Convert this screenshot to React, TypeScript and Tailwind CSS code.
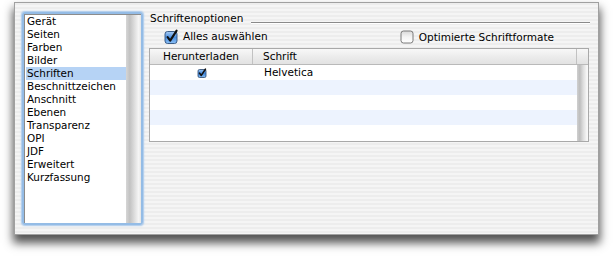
import React from "react";

const font = { fontFamily: '"DejaVu Sans", "Liberation Sans", sans-serif' };

function CheckedBox({ size = 13 }: { size?: number }) {
  return (
    <svg width={size + 2} height={size + 2} viewBox="0 0 15 15" className="shrink-0">
      <defs>
        <linearGradient id="cbb" x1="0" y1="0" x2="0" y2="1">
          <stop offset="0" stopColor="#a9cdf5" />
          <stop offset="0.5" stopColor="#4b8fe0" />
          <stop offset="1" stopColor="#8cc0f5" />
        </linearGradient>
      </defs>
      <rect x="1" y="2.5" width="12" height="12" rx="2.5" fill="url(#cbb)" stroke="#2f527f" strokeWidth="0.9" />
      <path d="M3.6 8.2 L6.2 11.6 L12.6 1.6" fill="none" stroke="#111" strokeWidth="2.1" strokeLinecap="round" strokeLinejoin="round" />
    </svg>
  );
}

function SmallChecked() {
  return (
    <svg width="10" height="10" viewBox="0 0 10 10" className="shrink-0">
      <defs>
        <linearGradient id="scb" x1="0" y1="0" x2="0" y2="1">
          <stop offset="0" stopColor="#9cc6f4" />
          <stop offset="0.5" stopColor="#3f86dc" />
          <stop offset="1" stopColor="#86bdf3" />
        </linearGradient>
      </defs>
      <rect x="1" y="1.5" width="8" height="8" rx="1.5" fill="url(#scb)" stroke="#28486f" strokeWidth="0.8" />
      <path d="M2.6 5.2 L4.3 7.4 L8.4 1.2" fill="none" stroke="#111" strokeWidth="1.6" strokeLinecap="round" strokeLinejoin="round" />
    </svg>
  );
}

function EmptyBox() {
  return (
    <svg width="14" height="14" viewBox="0 0 14 14" className="shrink-0">
      <defs>
        <linearGradient id="ebx" x1="0" y1="0" x2="0" y2="1">
          <stop offset="0" stopColor="#d8d8d8" />
          <stop offset="0.5" stopColor="#f4f4f4" />
          <stop offset="1" stopColor="#ffffff" />
        </linearGradient>
      </defs>
      <rect x="1" y="1" width="12" height="12" rx="2.5" fill="url(#ebx)" stroke="#6d6d6d" strokeWidth="0.9" />
    </svg>
  );
}

const items = [
  "Gerät",
  "Seiten",
  "Farben",
  "Bilder",
  "Schriften",
  "Beschnittzeichen",
  "Anschnitt",
  "Ebenen",
  "Transparenz",
  "OPI",
  "JDF",
  "Erweitert",
  "Kurzfassung",
];

export default function App() {
  return (
    <div className="w-[613px] h-[259px] bg-white overflow-hidden text-black" style={font}>
      <div className="ml-[14px] mt-[2px] w-[585px] h-[233px] border border-[#a0a0a0] bg-[image:repeating-linear-gradient(180deg,#ededed_0px,#ededed_2px,#f5f5f5_2px,#f5f5f5_4px)] shadow-[0_7px_9px_1px_rgba(0,0,0,0.68)] flex items-start pt-[9px] pl-[7px]">
        {/* Left list */}
        <div className="w-[121px] h-[213px] rounded-[3px] border-[2px] border-[#94bce6] shadow-[0_0_1.5px_1px_#a9c9ec] flex">
          <div className="flex-1 bg-white border-l border-t border-[#8c8c8c] pl-[1px]">
            {items.map((it) => (
              <div
                key={it}
                className={`h-[13px] leading-[13px] text-[10.4px] pl-[1px] ${it === "Schriften" ? "bg-[#b6d3f5]" : ""}`}
              >
                {it}
              </div>
            ))}
          </div>
          <div className="w-[15px] border-t border-[#8c8c8c] bg-[linear-gradient(90deg,#d6d6d6_0%,#c2c2c2_25%,#dcdcdc_55%,#f6f6f6_85%,#e4e4e4_100%)]" />
        </div>

        {/* Right column */}
        <div className="ml-[6px] w-[441px] flex flex-col">
          <div className="flex items-start h-[13px]">
            <span className="text-[10.5px] leading-[13px] pl-[1px]">Schriftenoptionen</span>
            <div className="flex-1 ml-[8px] mt-[10px] border-t border-[#8a8a8a] border-b-white border-b" />
          </div>

          <div className="flex items-center mt-[3px] h-[16px]">
            <div className="flex items-center ml-[15px] gap-[4px]">
              <CheckedBox />
              <span className="text-[10.5px] leading-[13px] mt-[1px]">Alles auswählen</span>
            </div>
            <div className="flex items-center ml-auto mr-[36px] gap-[5px] mt-[2px]">
              <EmptyBox />
              <span className="text-[10.5px] leading-[13px]">Optimierte Schriftformate</span>
            </div>
          </div>

          {/* Table */}
          <div className="mt-[4px] w-[440px] h-[94px] border border-[#a9a9a9] bg-white flex flex-col">
            <div className="h-[16px] flex border-b border-[#b9b9b9] bg-[linear-gradient(180deg,#f8f8f8,#ececec_50%,#e2e2e2)] text-[10.5px] leading-[15px]">
              <div className="w-[103px] border-r border-[#c2c2c2] text-center">Herunterladen</div>
              <div className="flex-1 pl-[10px]">Schrift</div>
              <div className="w-[12px] border-l border-[#c2c2c2]" />
            </div>
            <div className="flex flex-1">
              <div className="flex-1 flex flex-col">
                {[0, 1, 2, 3, 4].map((i) => (
                  <div
                    key={i}
                    className={`h-[15px] flex items-center text-[10.5px] ${i % 2 === 1 ? "bg-[#edf3fe]" : "bg-white"}`}
                  >
                    {i === 0 && (
                      <>
                        <div className="w-[103px] flex justify-center">
                          <SmallChecked />
                        </div>
                        <div className="pl-[11px] leading-[15px]">Helvetica</div>
                      </>
                    )}
                  </div>
                ))}
              </div>
              <div className="w-[11px] bg-[linear-gradient(90deg,#d0d0d0_0%,#bdbdbd_25%,#dcdcdc_55%,#f7f7f7_90%)]" />
            </div>
          </div>
        </div>
      </div>
    </div>
  );
}
